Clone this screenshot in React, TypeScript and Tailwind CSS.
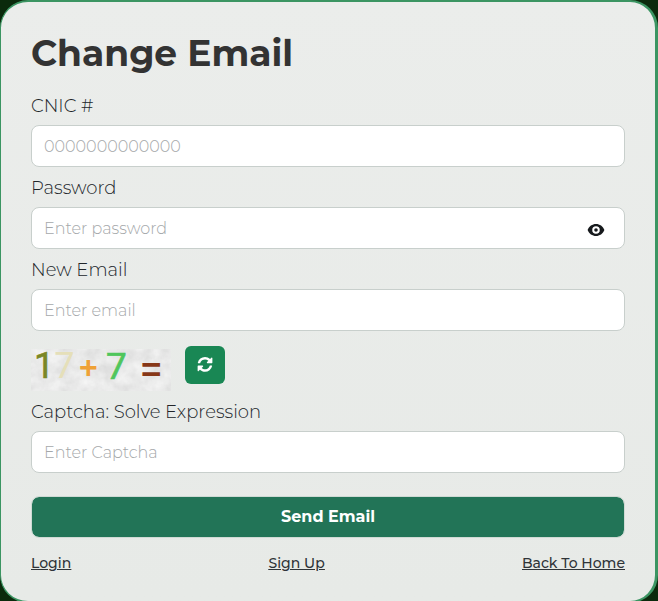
import { useState } from "react";

interface FieldProps {
  id: string;
  label: string;
  placeholder: string;
  type?: string;
  onToggle?: () => void;
}

function EyeIcon() {
  return (
    <svg width="18" height="18" viewBox="0 0 24 24" fill="currentColor" aria-hidden="true">
      <path
        fillRule="evenodd"
        d="M12 4C7 4 2.7 7.1 0.8 12 2.7 16.9 7 20 12 20s9.3-3.1 11.2-8C21.3 7.1 17 4 12 4zM12 17a5 5 0 1 1 0-10 5 5 0 0 1 0 10zM12 9.6a2.4 2.4 0 1 0 0 4.8 2.4 2.4 0 0 0 0-4.8z"
      />
    </svg>
  );
}

function RefreshIcon() {
  return (
    <svg width="16" height="16" viewBox="0 0 1536 1664" fill="currentColor" aria-hidden="true">
      <path d="M1511 928q0 5-1 7-64 268-268 434.500t-478 166.500q-146 0-282.500-55t-243.500-157l-129 129q-19 19-45 19t-45-19-19-45v-448q0-26 19-45t45-19h448q26 0 45 19t19 45-19 45l-137 137q71 66 161 102t187 36q134 0 250-65t186-179q11-17 53-117 8-23 30-23h192q13 0 22.500 9.500t9.500 22.500zm25-800v448q0 26-19 45t-45 19h-448q-26 0-45-19t-19-45 19-45l138-138q-148-137-349-137-134 0-250 65t-186 179q-11 17-53 117-8 23-30 23h-199q-13 0-22.500-9.500t-9.500-22.500v-7q65-268 270-434.500t480-166.500q146 0 284 55.500t245 156.500l130-129q19-19 45-19t45 19 19 45z" />
    </svg>
  );
}

function Field({ id, label, placeholder, type = "text", onToggle }: FieldProps) {
  return (
    <div className="mt-2">
      <label htmlFor={id} className="block text-lg leading-[26px] font-light text-[#212529]">
        {label}
      </label>
      <div className="relative mt-1.5">
        <input
          id={id}
          type={type}
          placeholder={placeholder}
          className="block h-[42px] w-full rounded-lg border border-[#c8cfcc] bg-white px-3 text-base font-light text-[#212529] placeholder:text-[#a5a8aa] focus:outline-none"
        />
        {onToggle && (
          <button
            type="button"
            aria-label="Show password"
            onClick={onToggle}
            className="absolute inset-y-0 right-5 flex items-center pt-1 text-[#16191c]"
          >
            <EyeIcon />
          </button>
        )}
      </div>
    </div>
  );
}

function CaptchaImage() {
  return (
    <svg width="140" height="49" viewBox="0 -7 140 49" className="-mt-1" role="img" aria-label="Captcha">
      <defs>
        <filter id="grain" x="0" y="0" width="100%" height="100%">
          <feTurbulence type="fractalNoise" baseFrequency="0.07" numOctaves="4" seed="8" />
          <feColorMatrix values="0.35 0 0 0 0.67  0.35 0 0 0 0.67  0.35 0 0 0 0.67  0 0 0 0 1" />
        </filter>
      </defs>
      <rect width="140" height="42" fill="#dcdddc" />
      <rect width="140" height="42" filter="url(#grain)" opacity="0.8" />
      <g className="font-[Roboto,sans-serif]">
        <text x="3" y="29" fontSize="36">
          <tspan fill="#7b8726" stroke="#7b8726" strokeWidth="0.6">1</tspan>
          <tspan fill="#e5dfb9">7</tspan>
        </text>
        <text x="75" y="30" fontSize="37" fill="#50c65c" stroke="#50c65c" strokeWidth="0.6">7</text>
      </g>
      <g className="font-['Liberation_Sans',sans-serif] font-bold">
        <text x="48" y="29" fontSize="32" fill="#efa136">+</text>
        <text x="110" y="33" fontSize="35" fill="#873717">=</text>
      </g>
    </svg>
  );
}

export default function App() {
  const [showPassword, setShowPassword] = useState(false);

  return (
    <div className="min-h-screen overflow-hidden bg-[#0b2a0c] font-[Montserrat,Inter,sans-serif]">
      <form
        onSubmit={(e) => e.preventDefault()}
        className="-mb-1 rounded-[28px] border-t-2 border-r-3 border-b-2 border-l border-[#3b9562] bg-[#e9ecea] bg-linear-to-b from-[#ebedeb] to-[#e7eae7] px-[30px] pt-7 pb-7"
      >
        <h1 className="mb-[17px] text-4xl leading-[46px] font-bold text-[#333333]">Change Email</h1>

        <Field id="cnic" label="CNIC #" placeholder="0000000000000" />
        <Field
          id="password"
          label="Password"
          placeholder="Enter password"
          type={showPassword ? "text" : "password"}
          onToggle={() => setShowPassword(!showPassword)}
        />
        <Field id="email" label="New Email" placeholder="Enter email" type="email" />

        {/* Captcha picture and refresh */}
        <div className="mt-[15px] flex items-start gap-[14px]">
          <CaptchaImage />
          <button
            type="button"
            aria-label="Refresh captcha"
            className="flex h-[38px] w-10 items-center justify-center rounded-md bg-[#198754] text-white"
          >
            <RefreshIcon />
          </button>
        </div>

        <Field id="captcha" label="Captcha: Solve Expression" placeholder="Enter Captcha" />

        <button
          type="submit"
          className="mt-[23px] block h-[42px] w-full rounded-lg border border-[#cfdad4] bg-[#227457] bg-clip-padding text-base font-bold text-white"
        >
          Send Email
        </button>

        <div className="mt-[15px] flex justify-between text-sm leading-5 font-medium text-[#2f3438] underline">
          <a href="#login">Login</a>
          <a href="#signup">Sign Up</a>
          <a href="#home">Back To Home</a>
        </div>
      </form>
    </div>
  );
}
